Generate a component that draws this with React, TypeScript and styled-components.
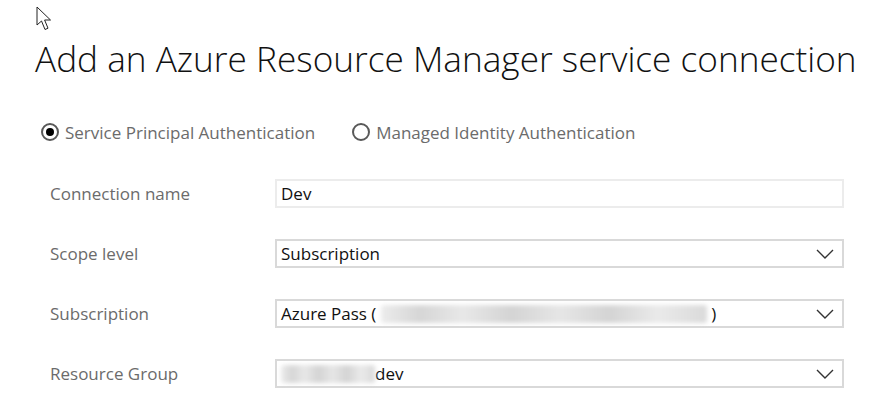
import styled, { createGlobalStyle } from "styled-components";

const GlobalStyle = createGlobalStyle`
  html, body {
    margin: 0;
    padding: 0;
    background: #ffffff;
  }
  body {
    font-family: "Open Sans", "Noto Sans", "Liberation Sans", sans-serif;
  }
`;

const Page = styled.div`
  position: relative;
  width: 880px;
  height: 415px;
  overflow: hidden;
  padding-top: 33px;
  box-sizing: border-box;
`;

const Cursor = styled.svg`
  position: absolute;
  left: 36px;
  top: 6px;
`;

const Title = styled.h1`
  margin: 0 0 0 35px;
  font-size: 35.2px;
  font-weight: 300;
  line-height: 50px;
  color: #111;
  white-space: nowrap;
`;

const RadioRow = styled.div`
  display: flex;
  align-items: center;
  gap: 37px;
  margin: 37px 0 0 41px;
  height: 24px;
`;

const RadioOption = styled.label`
  display: flex;
  align-items: center;
  gap: 6px;
  font-size: 17px;
  color: #6b6b6b;
`;

const RadioCircle = styled.span<{ $checked?: boolean }>`
  width: 14px;
  height: 14px;
  border: 2px solid #595959;
  border-radius: 50%;
  display: flex;
  align-items: center;
  justify-content: center;

  &::after {
    content: "";
    width: 8px;
    height: 8px;
    border-radius: 50%;
    background: ${(p) => (p.$checked ? "#000" : "transparent")};
  }
`;

const Form = styled.div`
  display: grid;
  grid-template-columns: 225px 569px;
  row-gap: 31px;
  align-items: center;
  margin: 35px 0 0 50px;
`;

const Label = styled.div`
  font-size: 17px;
  color: #6b6b6b;
`;

const Field = styled.div<{ $select?: boolean }>`
  box-sizing: border-box;
  height: 29px;
  border: 2px solid ${(p) => (p.$select ? "#d9d9d9" : "#ececec")};
  display: flex;
  align-items: center;
  padding: 0 8px 0 4px;
  font-size: 17px;
  color: #111;
  white-space: nowrap;
`;

const Value = styled.span`
  flex: 1;
  display: flex;
  align-items: center;
`;

const Blur = styled.span`
  display: inline-block;
  height: 18px;
  border-radius: 3px;
  background: linear-gradient(
    90deg,
    #ececec 0%,
    #d6d6d6 12%,
    #e8e8e8 25%,
    #d4d4d4 40%,
    #e6e6e6 55%,
    #d4d4d4 70%,
    #eaeaea 85%,
    #dadada 100%
  );
  filter: blur(2px);
`;

const Chevron = () => (
  <svg width="18" height="10" viewBox="0 0 18 10">
    <polyline points="1,1 9,9 17,1" fill="none" stroke="#333" strokeWidth="1.4" />
  </svg>
);

export default function App() {
  return (
    <>
      <GlobalStyle />
      <Page>
        <Cursor width="18" height="26" viewBox="0 0 18 26">
          <path
            d="M1 1 L1 19 L5.5 15 L9 23.5 L12 22.2 L8.6 14 L14.5 14 Z"
            fill="#fff"
            stroke="#222"
            strokeWidth="1"
            strokeLinejoin="round"
          />
        </Cursor>
        <Title>Add an Azure Resource Manager service connection</Title>
        <RadioRow>
          <RadioOption>
            <RadioCircle $checked />
            Service Principal Authentication
          </RadioOption>
          <RadioOption>
            <RadioCircle />
            Managed Identity Authentication
          </RadioOption>
        </RadioRow>
        <Form>
          <Label>Connection name</Label>
          <Field>
            <Value>Dev</Value>
          </Field>

          <Label>Scope level</Label>
          <Field $select>
            <Value>Subscription</Value>
            <Chevron />
          </Field>

          <Label>Subscription</Label>
          <Field $select>
            <Value>
              Azure Pass (&nbsp;
              <Blur style={{ width: 326 }} />
              &nbsp;)
            </Value>
            <Chevron />
          </Field>

          <Label>Resource Group</Label>
          <Field $select>
            <Value>
              <Blur style={{ width: 94 }} />
              dev
            </Value>
            <Chevron />
          </Field>
        </Form>
      </Page>
    </>
  );
}
